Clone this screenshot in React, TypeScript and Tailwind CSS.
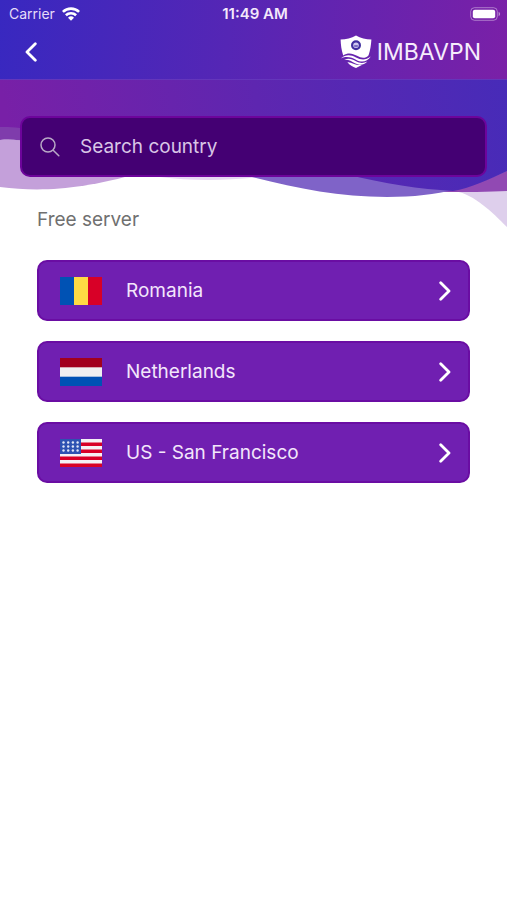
import type { ReactNode } from "react";

function RomaniaFlag() {
  return (
    <svg viewBox="0 0 42 28" className="h-7 w-[42px]" aria-hidden="true">
      <rect width="14" height="28" fill="#0052b4" />
      <rect x="14" width="14" height="28" fill="#ffda44" />
      <rect x="28" width="14" height="28" fill="#d80027" />
    </svg>
  );
}

function NetherlandsFlag() {
  return (
    <svg viewBox="0 0 42 28" className="h-7 w-[42px]" aria-hidden="true">
      <rect width="42" height="28" fill="#f0f0f0" />
      <rect width="42" height="9.3" fill="#a2001d" />
      <rect y="18.7" width="42" height="9.3" fill="#0052b4" />
    </svg>
  );
}

function UsFlag() {
  return (
    <svg viewBox="0 0 42 28" className="h-7 w-[42px]" aria-hidden="true">
      <rect width="42" height="28" fill="#f5f0f5" />
      {[3.5, 10.5, 17.5, 24.5].map((y) => (
        <rect key={y} y={y} width="42" height="3.5" fill="#d80027" />
      ))}
      <rect width="21" height="15" fill="#2e52b2" />
      {[3.5, 7.5, 11.5].map((y) =>
        [3.5, 8.2, 12.9, 17.6].map((x) => (
          <circle key={`${x}-${y}`} cx={x} cy={y} r="1.2" fill="#dfe6f7" />
        ))
      )}
    </svg>
  );
}

function Wifi() {
  return (
    <svg viewBox="0 0 18 14" className="h-[14px] w-[18px]" fill="none" stroke="white" strokeWidth="2.6" aria-hidden="true">
      <path d="M0.9 4.9a11.6 11.6 0 0 1 16.2 0" />
      <path d="M3.9 8.3a7.3 7.3 0 0 1 10.2 0" />
      <path d="M9 13.8 6 10.8a4.3 4.3 0 0 1 6 0Z" fill="white" stroke="none" />
    </svg>
  );
}

function Battery() {
  return (
    <svg viewBox="0 0 31 14" className="h-[14px] w-[31px]" aria-hidden="true">
      <rect x="0.7" y="0.7" width="26.6" height="12.6" rx="3.8" fill="none" stroke="white" strokeOpacity="0.4" />
      <rect x="2.8" y="2.8" width="22.4" height="8.4" rx="2" fill="white" />
      <path d="M28.6 4.8c2 .8 2 3.6 0 4.4z" fill="white" fillOpacity="0.5" />
    </svg>
  );
}

function Logo() {
  return (
    <svg viewBox="0 0 32 33" className="h-[33px] w-8" aria-hidden="true">
      <path
        d="M16 0.5C11.5 3.4 6 4.4 0.6 4.6C0.8 10 1.4 15 3.2 20.4C8 17.2 12.5 18.2 17 20.8S25.5 23.6 28.6 20.2C30.4 15 31 10 31.4 4.6C26 4.4 20.5 3.4 16 0.5Z"
        fill="white"
      />
      <path d="M0.8 23.4C6 18.8 11 19.8 16 22.4S25.5 25.4 30.8 21.6C27 27.6 21 27.4 16.4 25S7 20.8 0.8 23.4Z" fill="white" />
      <path d="M4.2 24.8C8.4 22.6 12.2 24 16 26.2S23.4 28.4 27.4 26.6C23 31 18.6 30 15 28.2S9 24.4 4.2 24.8Z" fill="white" />
      <path d="M7.4 27.2C11.4 26.6 14.6 30.6 21.8 30L16 33C12.6 31.8 9.8 30 7.4 27.2Z" fill="white" />
      <circle cx="16" cy="10.2" r="3.9" fill="#cfc8f0" stroke="#40309f" strokeWidth="2.2" />
      <rect x="14.2" y="10" width="3.6" height="2.2" fill="#7d70c4" />
    </svg>
  );
}

function Chevron({ className, flip }: { className: string; flip?: boolean }) {
  return (
    <svg viewBox="0 0 12 20" className={className} fill="none" stroke="white" strokeWidth="2.8" strokeLinecap="round" strokeLinejoin="round" aria-hidden="true">
      <path d={flip ? "M10.3 1.7 2 10l8.3 8.3" : "M1.7 1.7 10 10l-8.3 8.3"} />
    </svg>
  );
}

// Wave artwork behind the search box
function Waves() {
  return (
    <svg viewBox="0 0 507 150" preserveAspectRatio="none" className="absolute inset-x-0 top-0 h-[150px] w-full" aria-hidden="true">
      <defs>
        <linearGradient id="wave" x1="0" y1="0.04" x2="1" y2="0">
          <stop offset="0" stopColor="#7820a7" />
          <stop offset="0.5" stopColor="#5e26b0" />
          <stop offset="1" stopColor="#472bb8" />
        </linearGradient>
      </defs>
      <path d="M0 60C10 59 20 60 30 62L140 93C80 110 40 112 0 107Z" fill="#c4a0da" />
      <path d="M160 97C190 101 225 101 262 97Z" fill="#e6d8f2" />
      <path d="M455 111C475 115 492 132 507 147V111Z" fill="#decfec" />
      <path d="M0 47H30V62C20 60 10 59 0 60Z" fill="#7f3cac" />
      <path d="M440 112C465 112 490 112 507 111V89H440Z" fill="#9149b3" />
      <path d="M240 94C290 107 335 117 387 117C440 117 475 106 507 91V59H240Z" fill="#7f63c8" />
      <path d="M0 0H507V91C488 100 470 108 453 111C420 109 385 104 345 94L60 59C40 49 20 47 0 47Z" fill="url(#wave)" />
    </svg>
  );
}

function ServerRow({ name, flag }: { name: string; flag: ReactNode }) {
  return (
    <li>
      <button
        type="button"
        className="flex h-[61px] w-full items-center rounded-[10px] border-2 border-[#6a0da3] bg-[#701fb1] pr-[17px] pl-[21px] text-left text-white"
      >
        {flag}
        <span className="ml-6 flex-1 text-[19px] leading-6 text-[#f3e6fb]">{name}</span>
        <Chevron className="h-5 w-3" />
      </button>
    </li>
  );
}

export default function App() {
  const servers = [
    { name: "Romania", flag: <RomaniaFlag /> },
    { name: "Netherlands", flag: <NetherlandsFlag /> },
    { name: "US - San Francisco", flag: <UsFlag /> },
  ];

  return (
    <div className="min-h-screen bg-white font-['Inter',sans-serif]">
      <header className="border-b border-[#6436bb] bg-[linear-gradient(95deg,#3828c0_0%,#5526b5_45%,#7a20a7_100%)] text-white">
        {/* Status bar */}
        <div className="grid h-7 grid-cols-3 items-center pr-[6px] pl-[9px]">
          <div className="flex items-center gap-[7px] text-[14px] leading-5 text-[#e6dcf8]">
            Carrier
            <Wifi />
          </div>
          <div className="text-center text-[15px] leading-5 font-semibold text-[#f3e8fb]">11:49 AM</div>
          <div className="flex justify-end">
            <Battery />
          </div>
        </div>

        <div className="flex h-[51px] items-center justify-between pr-[26px] pb-1 pl-6">
          <button type="button" aria-label="Back" className="p-px">
            <Chevron className="h-5 w-3" flip />
          </button>
          <div className="flex items-center gap-[5px]">
            <Logo />
            <span className="text-[23px] leading-7 text-[#f6ecfc]">IMBAVPN</span>
          </div>
        </div>
      </header>

      <main className="relative">
        <Waves />
        <div className="relative px-5 pt-9">
          <label className="flex h-[61px] items-center gap-5 rounded-[10px] border-2 border-[#6d049b] bg-[#440073] px-[18px]">
            <svg viewBox="0 0 20 20" className="h-5 w-5 shrink-0" fill="none" stroke="#b9a9c6" strokeWidth="1.5" strokeLinecap="round" aria-hidden="true">
              <circle cx="8" cy="8" r="7" />
              <path d="m13.2 13.2 5.6 5.6" />
            </svg>
            <input
              type="text"
              aria-label="Search country"
              placeholder="Search country"
              className="min-w-0 flex-1 bg-transparent text-[19px] leading-6 text-white outline-none placeholder:text-[#d9c6e6]"
            />
          </label>
        </div>

        <section className="relative px-[37px] pt-[31px]">
          <h2 className="text-[19px] leading-6 text-[#707070]">Free server</h2>
          <ul className="mt-7 flex flex-col gap-5">
            {servers.map((server) => (
              <ServerRow key={server.name} name={server.name} flag={server.flag} />
            ))}
          </ul>
        </section>
      </main>
    </div>
  );
}
